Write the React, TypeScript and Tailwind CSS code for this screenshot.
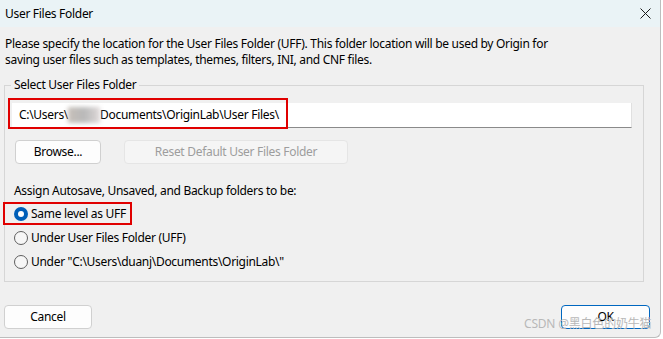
import React from "react";

const font = { fontFamily: '"Noto Sans", "Open Sans", sans-serif', letterSpacing: "-0.3px" };

function Radio({ checked, label }: { checked?: boolean; label: string }) {
  return (
    <div className="flex items-center h-[20px]">
      {checked ? (
        <span className="w-[14px] h-[14px] rounded-full bg-[#005fb8] flex items-center justify-center">
          <span className="w-[6px] h-[6px] rounded-full bg-white" />
        </span>
      ) : (
        <span className="w-[14px] h-[14px] rounded-full border border-[#5f5f5f] bg-[#f6f6f6]" />
      )}
      <span className="ml-[3px] text-[12px] text-black">{label}</span>
    </div>
  );
}

export default function App() {
  return (
    <div className="w-[663px] h-[339px] bg-white relative overflow-hidden" style={font}>
      <div className="w-[661px] h-[338px] bg-[#f0f0f0] border-r border-b border-[#bdbdbd] rounded-br-[6px] flex flex-col relative">
        {/* Title bar */}
        <div className="h-[27px] bg-[#eaf3f6] flex items-center justify-between pl-[5px] pr-[9px] shrink-0">
          <span className="text-[12px] text-black">User Files Folder</span>
          <svg width="11" height="11" viewBox="0 0 11 11">
            <path d="M0.5 0.5 L10.5 10.5 M10.5 0.5 L0.5 10.5" stroke="#1a1a1a" strokeWidth="1" />
          </svg>
        </div>

        {/* Description */}
        <div className="pl-[5px] pt-[9px] text-[12px] leading-[16px] text-black">
          <div>Please specify the location for the User Files Folder (UFF). This folder location will be used by Origin for</div>
          <div>saving user files such as templates, themes, filters, INI, and CNF files.</div>
        </div>

        {/* Group box */}
        <div className="relative ml-[4px] mt-[17px] w-[640px] h-[197px] border border-[#d6d6d6] pl-[7px] shrink-0">
          <div className="absolute left-[6px] top-[-9px] px-[3px] bg-[#f0f0f0] text-[12px] leading-[16px] text-black">
            Select User Files Folder
          </div>
          <div className="relative mt-[17px]">
            <div className="w-[620px] h-[25px] bg-white border-b border-[#8a8a8a] border-r border-r-[#e0e0e0] flex items-center pl-[7px] text-[12px] text-black">
              <span>C:\Users\</span>
              <span className="inline-block w-[32px] h-[16px] bg-gradient-to-r from-[#b9b0a8] via-[#a8a8a8] to-[#d8d0d0] blur-[2px] opacity-80" />
              <span>Documents\OriginLab\User Files\</span>
            </div>
            <div className="absolute left-[-4px] top-[-5px] w-[280px] h-[31px] border-2 border-[#e00000]" />
          </div>
          <div className="flex mt-[12px] ml-[3px] gap-[23px]">
            <button className="w-[86px] h-[24px] bg-[#fdfdfd] border border-[#d0d0d0] rounded-[4px] text-[12px] text-black">
              Browse...
            </button>
            <button className="w-[224px] h-[24px] bg-[#f5f5f5] border border-[#e5e5e5] rounded-[4px] text-[12px] text-[#9d9d9d]">
              Reset Default User Files Folder
            </button>
          </div>
          <div className="mt-[19px] ml-[2px] text-[12px] text-black leading-[16px]">
            Assign Autosave, Unsaved, and Backup folders to be:
          </div>
          <div className="relative mt-[5px] ml-[2px] flex flex-col gap-[4px]">
            <Radio checked label="Same level as UFF" />
            <Radio label="Under User Files Folder (UFF)" />
            <Radio label={'Under "C:\\Users\\duanj\\Documents\\OriginLab\\"'} />
            <div className="absolute left-[-11px] top-[-2px] w-[129px] h-[23px] border-2 border-[#e00000]" />
          </div>
        </div>

        {/* Footer */}
        <div className="flex justify-between mt-[23px] pl-[4px] pr-[10px]">
          <button className="w-[88px] h-[24px] bg-[#fdfdfd] border border-[#d0d0d0] rounded-[4px] text-[12px] text-black">
            Cancel
          </button>
          <button className="w-[89px] h-[24px] bg-[#fdfdfd] border border-[#0067c0] rounded-[4px] text-[12px] text-black">
            OK
          </button>
        </div>

        <div
          className="absolute left-[524px] top-[316px] text-[12px] leading-[16px] text-[#b8b8b8] whitespace-nowrap"
          style={{ fontFamily: '"Noto Sans", "Noto Sans CJK SC", sans-serif', letterSpacing: "-0.2px" }}
        >
          CSDN @黑白色的奶牛猫
        </div>
      </div>
    </div>
  );
}
